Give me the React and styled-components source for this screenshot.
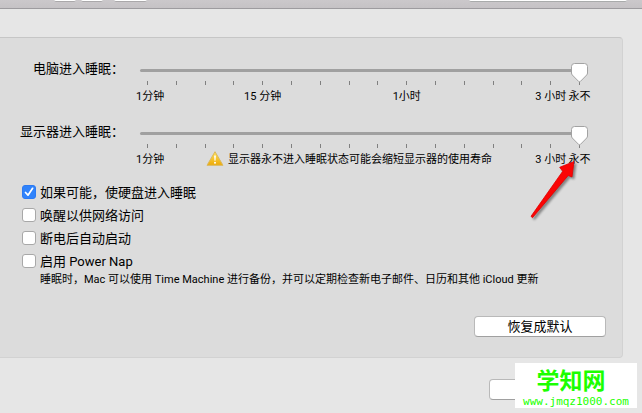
import { useState } from "react";
import { createGlobalStyle, styled } from "styled-components";

const TICKS = 16;

const thumb = `url("data:image/svg+xml,%3Csvg xmlns='http://www.w3.org/2000/svg' width='17' height='20'%3E%3Cpath d='M3.5 .5h10a3 3 0 0 1 3 3v6.5c0 .8-.3 1.4-.8 2L9.4 18.4q-.9.8-1.8 0L1.3 12C.8 11.4.5 10.8.5 10V3.5a3 3 0 0 1 3-3z' fill='white' stroke='%23a2a2a2'/%3E%3C/svg%3E")`;

const sliders = [
    {
        id: "computer",
        label: "电脑进入睡眠：",
        marks: [
            { column: 1, text: "1分钟" },
            { column: 5, text: "15 分钟" },
            { column: 10, text: "1小时" },
            { column: 15, text: "3 小时" },
            { column: 16, text: "永不" },
        ],
    },
    {
        id: "display",
        label: "显示器进入睡眠：",
        warning: "显示器永不进入睡眠状态可能会缩短显示器的使用寿命",
        marks: [
            { column: 1, text: "1分钟" },
            { column: 15, text: "3 小时" },
            { column: 16, text: "永不" },
        ],
    },
];

const options = [
    { id: "disk", label: "如果可能，使硬盘进入睡眠", checked: true },
    { id: "network", label: "唤醒以供网络访问" },
    { id: "restart", label: "断电后自动启动" },
    { id: "nap", label: "启用 Power Nap" },
];

const WarningIcon = () => (
    <svg width="18" height="18" viewBox="0 0 18 18" aria-hidden="true">
        <defs>
            <linearGradient id="warn" x1="0" y1="0" x2="0" y2="1">
                <stop offset="0" stopColor="#ffe25a" />
                <stop offset="1" stopColor="#eda906" />
            </linearGradient>
        </defs>
        <path
            d="M9 .7 17 14.300H1z"
            fill="url(#warn)"
            stroke="#d9b860"
            strokeWidth="1"
            strokeLinejoin="round"
        />
        <path d="M8.1 4.500h1.800l-.4 5.300h-1z" fill="#fff" />
        <circle cx="9" cy="11.800" r="1" fill="#fff" />
    </svg>
);

const SleepSlider = ({ id, label, marks, warning, children }) => {
    const [value, setValue] = useState(TICKS - 1);
    return (
        <SliderRow>
            <SliderLabel htmlFor={id}>{label}</SliderLabel>
            <SliderBody>
                <Range
                    id={id}
                    type="range"
                    min="0"
                    max={TICKS - 1}
                    value={value}
                    onChange={(e) => setValue(Number(e.target.value))}
                />
                <Scale>
                    {Array.from({ length: TICKS }, (_, i) => (
                        <Tick key={i} />
                    ))}
                </Scale>
                <Scale>
                    {marks.map((mark) => (
                        <Mark key={mark.column} $column={mark.column}>
                            {mark.text}
                        </Mark>
                    ))}
                    {warning && (
                        <Warning>
                            <WarningIcon />
                            {warning}
                        </Warning>
                    )}
                </Scale>
                {children}
            </SliderBody>
        </SliderRow>
    );
};

const App = () => {
    return (
        <>
            <GlobalStyle />
            <Toolbar>
                <ToolbarGroup>
                    <ToolbarButton $width={22} aria-label="后退" />
                    <ToolbarButton $width={22} aria-label="前进" />
                </ToolbarGroup>
                <ToolbarButton $width={33} aria-label="显示全部" />
                <Search type="search" aria-label="搜索" />
            </Toolbar>
            <Content>
                <Panel>
                    <Sliders>
                        {sliders.map((slider) => (
                            <SleepSlider key={slider.id} {...slider}>
                                {slider.warning && (
                                    <Arrow width="48" height="62" viewBox="0 0 48 62" aria-hidden="true">
                                        <path
                                            d="M44 1.500 29.700 7.300 32.700 11.300 1 56.300 2.500 57.700 38.200 15.500 42 17z"
                                            fill="#fa0505"
                                            stroke="#e00000"
                                            strokeWidth=".8"
                                        />
                                    </Arrow>
                                )}
                            </SleepSlider>
                        ))}
                    </Sliders>
                    <Options>
                        {options.map((option) => (
                            <Option key={option.id}>
                                <Checkbox type="checkbox" defaultChecked={option.checked} />
                                {option.label}
                            </Option>
                        ))}
                    </Options>
                    <Note>睡眠时，Mac 可以使用 Time Machine 进行备份，并可以定期检查新电子邮件、日历和其他 iCloud 更新</Note>
                    <Actions>
                        <Button>恢复成默认</Button>
                    </Actions>
                </Panel>
                <Footer>
                    <Button aria-label="帮助" />
                    <Watermark>
                        <strong>学知网</strong>
                        <span>www.jmqz1000.com</span>
                    </Watermark>
                </Footer>
            </Content>
        </>
    );
};

const GlobalStyle = createGlobalStyle`
    * {
        box-sizing: border-box;
    }
    body {
        margin: 0;
        background: #e6e6e6;
        color: #000;
        font: 13px/16px Roboto, "Noto Sans CJK SC", sans-serif;
        overflow-x: hidden;
    }
    button,
    input {
        font: inherit;
        margin: 0;
    }
`;

const Toolbar = styled.header`
    display: flex;
    height: 9px;
    gap: 11px;
    padding: 0 15px 0 54px;
    background: linear-gradient(#cbc8cb, #c5c2c5);
    border-bottom: 1px solid #9d9b9f;
`;

const ToolbarGroup = styled.div`
    display: flex;
    gap: 5px;
`;

const ToolbarButton = styled.button`
    width: ${({ $width }) => $width}px;
    height: 2px;
    padding: 0;
    border: 0;
    border-bottom: 1px solid #aaa8aa;
    border-radius: 0 0 2px 2px;
    background: #fff;
`;

const Search = styled.input`
    width: 158px;
    height: 2px;
    margin-left: auto;
    padding: 0;
    border: 0;
    border-bottom: 1px solid #a9abab;
    border-radius: 0 0 2px 2px;
    background: #fff;
    appearance: none;
`;

const Content = styled.main`
    padding: 28px 19px 0 0;
`;

const Panel = styled.section`
    padding: 23px 16px 20px 0;
    background: #dcdcdc;
    border: 1px solid #d2d2d2;
    border-top-color: #c6c6c6;
    border-left: 0;
    border-radius: 0 4px 4px 0;
`;

const Sliders = styled.div`
    display: grid;
    gap: 19px;
    padding-right: 12px;
`;

const SliderRow = styled.div`
    display: grid;
    grid-template-columns: 124px 1fr;
    gap: 9px;
`;

const SliderLabel = styled.label`
    text-align: right;
    white-space: nowrap;
`;

const SliderBody = styled.div`
    position: relative;
    display: flex;
    flex-direction: column;
`;

const Range = styled.input`
    appearance: none;
    height: 19px;
    margin: 0 6px 1px 7px;
    background: none;
    position: relative;
    z-index: 1;

    &::-webkit-slider-runnable-track {
        height: 3px;
        border-radius: 2px;
        background: #a0a0a0;
    }
    &::-webkit-slider-thumb {
        appearance: none;
        width: 17px;
        height: 20px;
        margin-top: -6px;
        background: ${thumb} no-repeat;
    }
`;

const Scale = styled.div`
    display: grid;
    grid-template-columns: repeat(${TICKS}, minmax(0, 1fr));
    font-size: 11px;
    margin-bottom: 4px;

    &:last-of-type {
        margin-bottom: 0;
    }
`;

const Tick = styled.span`
    width: 1px;
    height: 4px;
    justify-self: center;
    background: #808080;
`;

const Mark = styled.span`
    grid-column: ${({ $column }) => $column};
    grid-row: 1;
    justify-self: ${({ $column }) => ($column === 1 ? "start" : "center")};
    padding-left: ${({ $column }) => ($column === 1 ? "3px" : "0")};
    white-space: nowrap;
`;

const Warning = styled.span`
    grid-column: 2 / 15;
    grid-row: 1;
    height: 16px;
    display: flex;
    justify-content: center;
    align-items: center;
    gap: 4px;
    white-space: nowrap;

    svg {
        flex: none;
    }
`;

const Arrow = styled.svg`
    position: absolute;
    top: 36px;
    right: 16px;
    z-index: 2;
    filter: drop-shadow(2px 2px 1px rgba(0, 0, 0, 0.4));
    pointer-events: none;
`;

const Options = styled.div`
    display: grid;
    justify-items: start;
    gap: 5px;
    margin: 16px 0 1px 22px;
    line-height: 18px;
`;

const Option = styled.label`
    display: flex;
    align-items: flex-start;
    gap: 4px;
`;

const Checkbox = styled.input`
    appearance: none;
    width: 14px;
    height: 14px;
    margin-top: 1px;
    border: 1px solid #a8a8a8;
    border-radius: 3px;
    background: #fff;

    &:checked {
        border-color: #2b7af3;
        background: #3083fb
            url("data:image/svg+xml,%3Csvg xmlns='http://www.w3.org/2000/svg' viewBox='0 0 12 12'%3E%3Cpath d='M2.5 6.5 5 9.2 9.6 2.3' fill='none' stroke='white' stroke-width='1.7' stroke-linecap='round' stroke-linejoin='round'/%3E%3C/svg%3E");
    }
`;

const Note = styled.p`
    margin: 0 0 0 40px;
    font-size: 11px;
`;

const Actions = styled.div`
    display: flex;
    justify-content: flex-end;
    margin-top: 28px;
`;

const Button = styled.button`
    width: 132px;
    height: 21px;
    padding: 0;
    border: 1px solid #b9b9b9;
    border-bottom-color: #a0a0a0;
    border-radius: 4px;
    background: #fff;
    color: #000;
`;

const Footer = styled.footer`
    position: relative;
    display: flex;
    justify-content: flex-end;
    padding: 21px 2px 13px 0;
`;

const Watermark = styled.div`
    position: absolute;
    top: 5px;
    right: -14px;
    width: 122px;
    height: 45px;
    display: flex;
    flex-direction: column;
    align-items: center;
    padding-top: 7px;
    background: #fff;
    color: #1cff00;

    strong {
        margin-right: 10px;
        font-size: 23px;
        line-height: 24px;
    }
    span {
        font: 11px/16px "DejaVu Sans Mono", monospace;
    }
`;

export default App;
